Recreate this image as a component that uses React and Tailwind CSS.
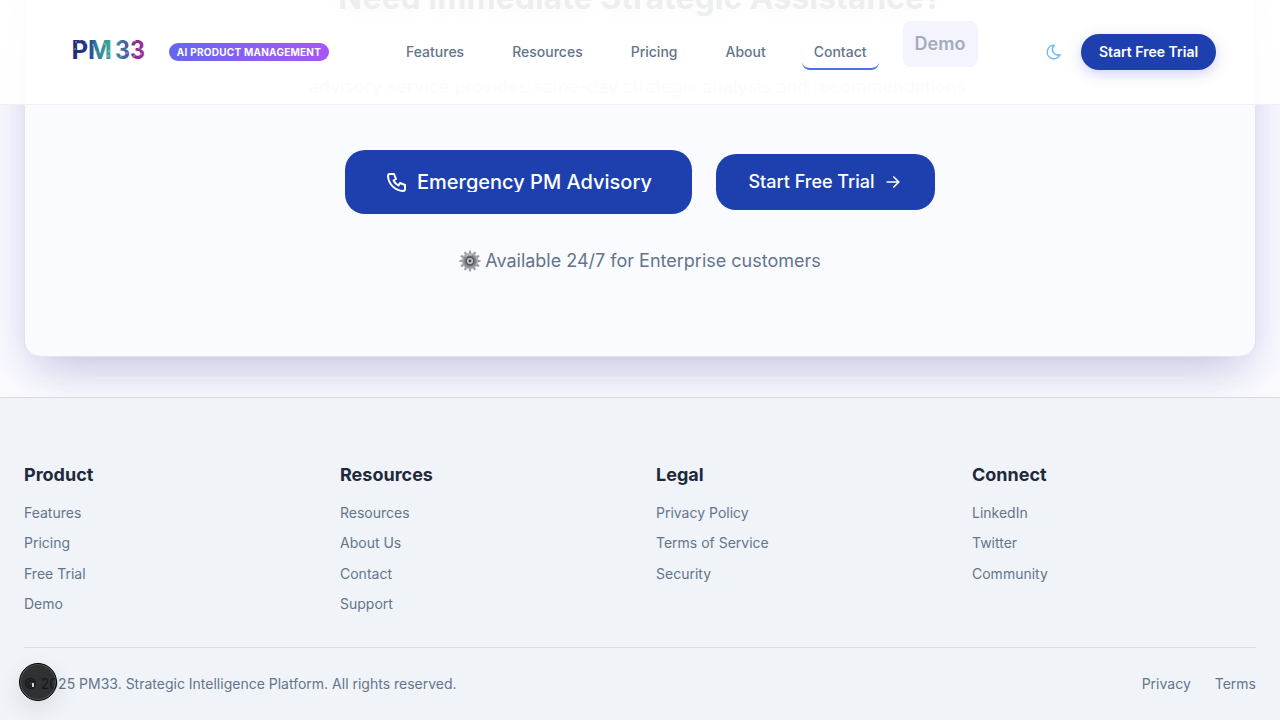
import React from "react";

const navItems = ["Features", "Resources", "Pricing", "About"];

const columns = [
  { title: "Product", links: ["Features", "Pricing", "Free Trial", "Demo"] },
  { title: "Resources", links: ["Resources", "About Us", "Contact", "Support"] },
  { title: "Legal", links: ["Privacy Policy", "Terms of Service", "Security"] },
  { title: "Connect", links: ["LinkedIn", "Twitter", "Community"] },
];

const iconPaths = {
  phone: "M5 4h4l2 5l-2.5 1.5a11 11 0 0 0 5 5l1.5 -2.5l5 2v4a2 2 0 0 1 -2 2a16 16 0 0 1 -15 -15a2 2 0 0 1 2 -2",
  arrow: "M5 12h14M13 18l6 -6M13 6l6 6",
  moon: "M12 3c.132 0 .263 0 .393 0a7.5 7.5 0 0 0 7.92 12.446a9 9 0 1 1 -8.313 -12.454z",
};

function Icon({ name, size, stroke = 2, className }) {
  return (
    <svg width={size} height={size} viewBox="0 0 24 24" fill="none" stroke="currentColor" strokeWidth={stroke} strokeLinecap="round" strokeLinejoin="round" className={className}>
      <path d={iconPaths[name]} />
    </svg>
  );
}

const specks = [
  [4, 7], [3, 14], [8, 5], [14, 8], [10, 14], [21, 10], [24, 17], [22, 21], [28, 14],
  [33, 9], [37, 16], [36, 21], [47, 6], [52, 12], [55, 18], [49, 21], [63, 6], [67, 13], [69, 19], [62, 21],
];

function Logo() {
  return (
    <svg width="74" height="34" viewBox="0 -3 74 34" aria-label="PM33">
      <defs>
        <linearGradient id="pm" gradientUnits="userSpaceOnUse" x1="0" y1="0" x2="40" y2="0">
          <stop offset="0" stopColor="#262a72" />
          <stop offset="0.4" stopColor="#20368c" />
          <stop offset="0.6" stopColor="#347b9d" />
          <stop offset="1" stopColor="#43aa96" />
        </linearGradient>
        <linearGradient id="threes" gradientUnits="userSpaceOnUse" x1="43" y1="0" x2="73" y2="0">
          <stop offset="0" stopColor="#3b92a6" />
          <stop offset="0.45" stopColor="#4b5598" />
          <stop offset="0.65" stopColor="#842b8e" />
          <stop offset="1" stopColor="#a82b98" />
        </linearGradient>
      </defs>
      <g fontFamily="Inter, sans-serif" fontWeight="700" fontSize="25.5">
        <text x="-0.5" y="23.5" fill="url(#pm)" textLength="40.5" lengthAdjust="spacingAndGlyphs">PM</text>
        <text x="43" y="23.5" fill="url(#threes)" textLength="30" lengthAdjust="spacingAndGlyphs">33</text>
      </g>
      {specks.map(([x, y]) => (
        <circle key={`${x}-${y}`} cx={x} cy={y} r="0.7" fill="white" opacity="0.75" />
      ))}
    </svg>
  );
}

const teeth = Array.from({ length: 12 }, (_, i) => i * 30);

function Gear() {
  return (
    <svg width="22" height="22" viewBox="-11 -11 22 22" aria-hidden="true">
      {teeth.map((a) => (
        <path key={a} d="M-1.4 -7.5L-0.8 -10.6H0.8L1.4 -7.5Z" fill="#9a9ea3" transform={`rotate(${a})`} />
      ))}
      <circle r="8" fill="#a5a9ad" />
      <circle r="6.6" fill="#85898e" />
      <circle r="4.7" fill="#555a60" />
      <circle r="3" fill="#c8ccd0" />
      <circle r="1.4" fill="#3f444a" />
      <path d="M-4.5 -4.5A6.4 6.4 0 0 1 2 -6" fill="none" stroke="#c3c7cb" />
    </svg>
  );
}

function Header() {
  return (
    <header className="absolute inset-x-0 top-0 z-20 flex h-[105px] items-center border-b border-[#eef0f4] bg-white/92 pl-[72px] pr-16">
      <div className="flex w-[322px] items-center gap-[23px]">
        <div className="-mt-1.5"><Logo /></div>
        <span className="flex h-[18px] w-40 items-center justify-center whitespace-nowrap rounded-full bg-linear-to-r from-[#6366f1] to-[#a855f7] text-[10px] font-bold tracking-[0.025em] text-white">
          AI PRODUCT MANAGEMENT
        </span>
      </div>
      <nav className="flex items-center gap-6 text-sm font-medium text-[#64748b]">
        {navItems.map((n) => (
          <a key={n} className="px-3">{n}</a>
        ))}
        <a className="rounded-lg border-b-2 border-[#4f6ef0] px-3 pb-1.5 pt-2">Contact</a>
        <a className="-mt-4 flex h-[46px] w-[75px] items-center justify-center rounded-lg bg-[#f4f4fe] text-lg font-semibold text-[#a3adba]">
          Demo
        </a>
      </nav>
      <div className="ml-auto flex items-center gap-[18px]">
        <Icon name="moon" size={18} className="text-[#6cbafb]" />
        <button className="h-9 w-[135px] rounded-[18px] bg-[#1e40af] text-sm font-semibold text-white shadow-[0_4px_14px_rgba(99,102,241,0.3)]">
          Start Free Trial
        </button>
      </div>
    </header>
  );
}

export default function App() {
  return (
    <div className="relative flex h-[720px] w-full flex-col overflow-hidden bg-[#fbfbff] font-['Inter',sans-serif]">
      <Header />
      <main className="h-[397px] shrink-0 px-6">
        <section className="-mt-6 flex h-[381px] flex-col items-center rounded-2xl border border-[#e2e4ea] bg-[#fafbff] shadow-[0_25px_50px_-12px_rgba(39,46,129,0.23),0_0_40px_rgba(99,102,241,0.1)]">
          <h2 className="mt-px text-[32px] font-bold leading-10 text-[#1e293b] [text-shadow:0_4px_16px_rgba(30,41,59,0.3)]">Need Immediate Strategic Assistance?</h2>
          <p className="mt-[54px] text-lg leading-[30px] text-[#64748b]/35 [text-shadow:0_0_12px_rgba(30,41,59,0.15)]">
            advisory service provides same-day strategic analysis and recommendations.
          </p>
          <div className="mt-12 flex items-center gap-6 text-white">
            <button className="flex h-16 w-[347px] items-center justify-center gap-2 rounded-[20px] bg-[#1e40af] text-xl font-medium">
              <Icon name="phone" size={24} />
              <span className="h-5 overflow-hidden leading-5">Emergency PM Advisory</span>
            </button>
            <button className="flex h-14 w-[219px] items-center justify-center gap-2 rounded-[20px] bg-[#1e40af] text-lg font-medium">
              Start Free Trial
              <Icon name="arrow" size={20} />
            </button>
          </div>
          <p className="mt-8 flex items-center gap-1 text-lg leading-[30px] text-[#64748b]">
            <Gear />
            Available 24/7 for Enterprise customers
          </p>
        </section>
      </main>
      <footer className="relative h-[323px] shrink-0 border-t border-[#d9dbe1] bg-[#edf2f8]/80 px-6 pt-[63px] text-[#64748b]">
        <div className="grid h-[186px] grid-cols-4 gap-x-8">
          {columns.map((c) => (
            <div key={c.title}>
              <h3 className="mb-3.5 text-lg font-bold leading-[27px] text-[#1e293b]">{c.title}</h3>
              <ul className="flex flex-col gap-2 text-sm leading-[22.4px]">
                {c.links.map((l) => <li key={l}>{l}</li>)}
              </ul>
            </div>
          ))}
        </div>
        <div className="flex h-[73px] items-center justify-between border-t border-[#d9dde3] text-sm">
          <p>© 2025 PM33. Strategic Intelligence Platform. All rights reserved.</p>
          <div className="flex gap-6"><a>Privacy</a><a>Terms</a></div>
        </div>
      </footer>
      <div className="absolute left-[19px] top-[663px] z-30 flex h-[38px] w-[38px] items-center justify-center rounded-full border border-black bg-black/80 shadow-[inset_0_0_0_1px_#555,0_8px_24px_rgba(0,0,0,0.1)]">
        <span className="-ml-2.5 mt-1.5 h-1 w-0.5 bg-[#d4d4d4]" />
      </div>
    </div>
  );
}
